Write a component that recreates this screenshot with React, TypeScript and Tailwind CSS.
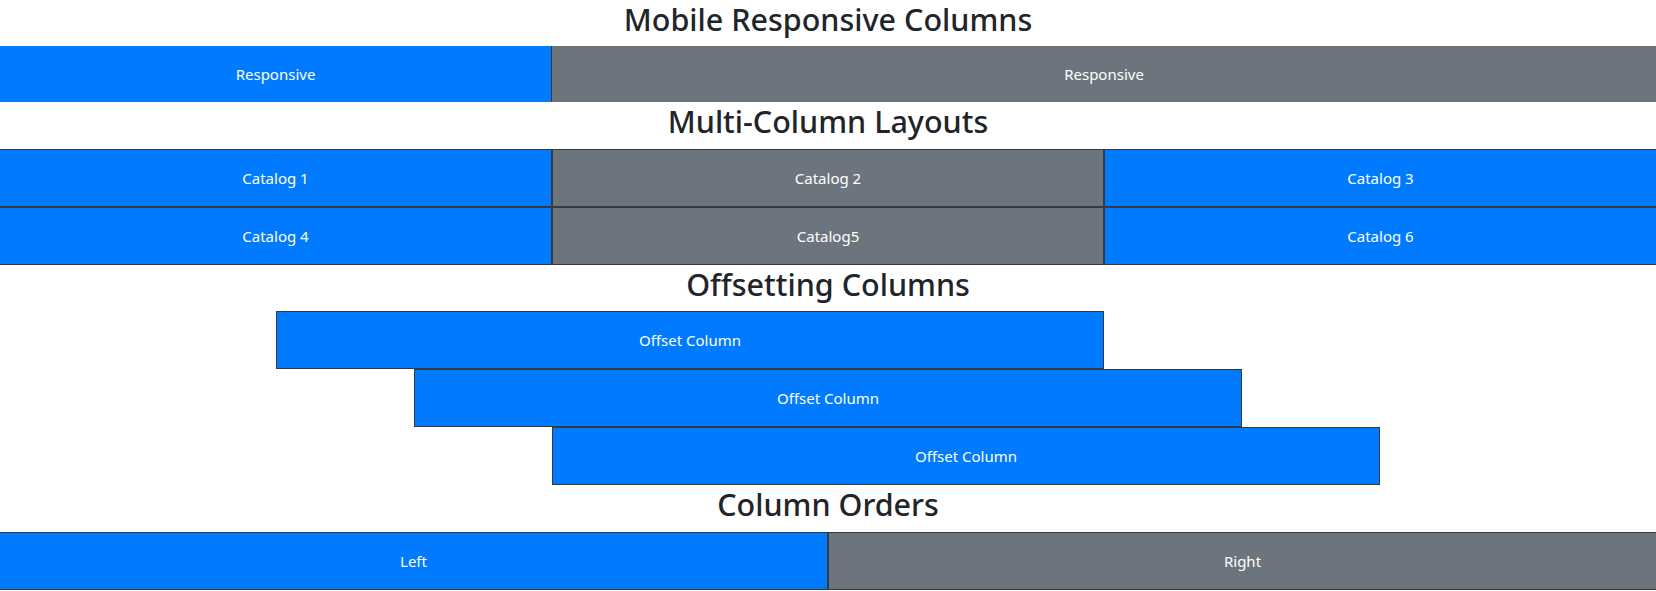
import React from "react";

const font = { fontFamily: '"Segoe UI", "Noto Sans", "Open Sans", sans-serif' };

function Heading({ children }: { children: React.ReactNode }) {
  return (
    <h2 className="text-center text-[30.5px] leading-[38.4px] font-medium text-[#212529] mb-2">
      {children}
    </h2>
  );
}

function Cell({ label, className }: { label: string; className: string }) {
  return (
    <div className={`py-4 text-center text-white text-[15px] leading-6 border-[#343a40] ${className}`}>
      {label}
    </div>
  );
}

export default function App() {
  return (
    <div className="w-full bg-white" style={font}>
      {/* Mobile responsive */}
      <Heading>Mobile Responsive Columns</Heading>
      <div className="grid grid-cols-12">
        <Cell label="Responsive" className="col-span-4 bg-[#007bff] border-r" />
        <Cell label="Responsive" className="col-span-8 bg-[#6c757d]" />
      </div>

      {/* Multi column */}
      <Heading>Multi-Column Layouts</Heading>
      <div className="grid grid-cols-3">
        <Cell label="Catalog 1" className="bg-[#007bff] border-y border-r" />
        <Cell label="Catalog 2" className="bg-[#6c757d] border" />
        <Cell label="Catalog 3" className="bg-[#007bff] border-y border-l" />
      </div>
      <div className="grid grid-cols-3">
        <Cell label="Catalog 4" className="bg-[#007bff] border-y border-r" />
        <Cell label="Catalog5" className="bg-[#6c757d] border" />
        <Cell label="Catalog 6" className="bg-[#007bff] border-y border-l" />
      </div>

      {/* Offsets */}
      <Heading>Offsetting Columns</Heading>
      <div className="grid grid-cols-12">
        <Cell label="Offset Column" className="col-start-3 col-span-6 bg-[#007bff] border" />
      </div>
      <div className="grid grid-cols-12">
        <Cell label="Offset Column" className="col-start-4 col-span-6 bg-[#007bff] border" />
      </div>
      <div className="grid grid-cols-12">
        <Cell label="Offset Column" className="col-start-5 col-span-6 bg-[#007bff] border" />
      </div>

      {/* Order */}
      <Heading>Column Orders</Heading>
      <div className="grid grid-cols-2">
        <Cell label="Right" className="order-2 bg-[#6c757d] border-y border-l" />
        <Cell label="Left" className="order-1 bg-[#007bff] border-y border-r" />
      </div>
    </div>
  );
}
